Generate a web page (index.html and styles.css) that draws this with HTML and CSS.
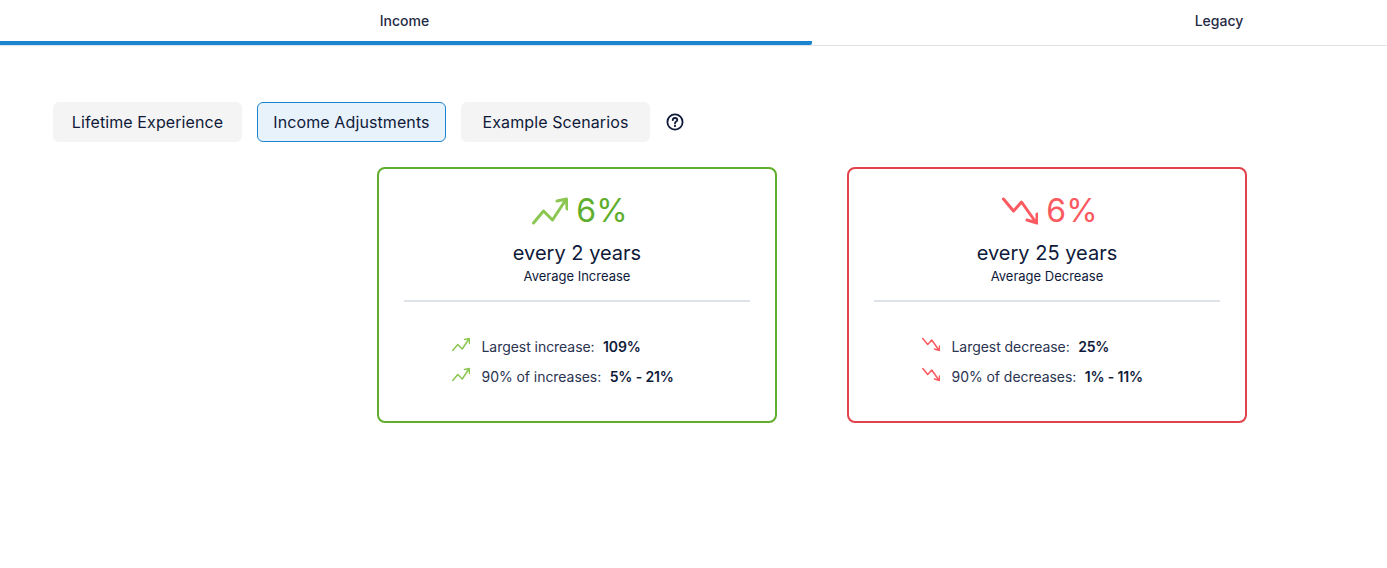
FILE: index.html
```html
<!DOCTYPE html>
<html lang="en">
<head>
<meta charset="utf-8">
<title>Income</title>
<link rel="stylesheet" href="styles.css">
</head>
<body>
<svg class="defs" width="0" height="0" aria-hidden="true">
  <defs>
    <symbol id="up" viewBox="0 0 36 30"><path d="M1.5 27 L11.5 15 L20.5 24 L34 3.5 M25 5 L34.5 3 L35 13" fill="none" stroke="currentColor" stroke-width="3" stroke-linecap="round" stroke-linejoin="round"/></symbol>
    <symbol id="down" viewBox="0 0 36 30"><path d="M1.5 3 L11.5 15 L19.5 6 L34 26.5 M25 24 L35 27 L35 18" fill="none" stroke="currentColor" stroke-width="3" stroke-linecap="round" stroke-linejoin="round"/></symbol>
  </defs>
</svg>
<div class="page">
  <nav class="tabs">
    <div class="tab tab-active">Income</div>
    <div class="tab tab-second">Legacy</div>
  </nav>
  <div class="toolbar">
    <button class="pill">Lifetime Experience</button>
    <button class="pill pill-active">Income Adjustments</button>
    <button class="pill">Example Scenarios</button>
    <svg class="help" viewBox="0 0 18 18" width="18" height="18" aria-hidden="true">
      <circle cx="9" cy="9" r="7.6" fill="none" stroke="currentColor" stroke-width="1.8"/>
      <path d="M6.7 7.1 C6.8 5.7 7.8 5 9 5 C10.3 5 11.3 5.8 11.3 7 C11.3 8.6 9 8.6 9 10.4" fill="none" stroke="currentColor" stroke-width="1.8" stroke-linecap="round"/>
      <circle cx="9" cy="12.9" r="1.1" fill="currentColor"/>
    </svg>
  </div>
  <main class="cards">
    <section class="card card-up">
      <div class="headline">
        <svg class="icon-lg"><use href="#up"/></svg>
        <span class="pct">6%</span>
      </div>
      <div class="freq">every 2 years</div>
      <div class="avg">Average Increase</div>
      <hr class="rule">
      <ul class="stats">
        <li class="stat"><svg class="icon-sm"><use href="#up"/></svg><span>Largest increase:</span><b>109%</b></li>
        <li class="stat"><svg class="icon-sm"><use href="#up"/></svg><span>90% of increases:</span><b>5% - 21%</b></li>
      </ul>
    </section>
    <section class="card card-down">
      <div class="headline">
        <svg class="icon-lg"><use href="#down"/></svg>
        <span class="pct">6%</span>
      </div>
      <div class="freq">every 25 years</div>
      <div class="avg">Average Decrease</div>
      <hr class="rule">
      <ul class="stats">
        <li class="stat"><svg class="icon-sm"><use href="#down"/></svg><span>Largest decrease:</span><b>25%</b></li>
        <li class="stat"><svg class="icon-sm"><use href="#down"/></svg><span>90% of decreases:</span><b>1% - 11%</b></li>
      </ul>
    </section>
  </main>
</div>
</body>
</html>
```

FILE: styles.css
```css
* { box-sizing: border-box; }
html, body { margin: 0; padding: 0; height: 100%; overflow: hidden; background: #fff; }
body { font-family: Inter, "Liberation Sans", sans-serif; color: #0f1a3a; }
.defs { position: absolute; }
.page { width: 1624px; }

.tabs { display: grid; grid-template-columns: 812px 812px; height: 46px; border-bottom: 1px solid #dfe3e8; }
.tab { height: 45px; display: flex; justify-content: center; padding-top: 13px; font-size: 14px; line-height: 16px; font-weight: 500; color: #1f2a44; }
.tab-active { border-bottom: 4px solid #1b84d0; border-radius: 0 2px 2px 0; padding-right: 3px; }
.tab-second { padding-left: 2px; }

.toolbar { display: flex; align-items: center; gap: 15px; padding: 56px 0 0 53px; }
.pill { width: 189px; height: 40px; padding: 0; border: 1px solid #f4f4f4; border-radius: 6px; background: #f4f4f4; font: 400 16px/20px Inter, "Liberation Sans", sans-serif; letter-spacing: .1px; color: #0f1a3a; }
.pill-active { background: #e8f2fb; border-color: #1b84d0; }
.help { margin-left: 1px; color: #0f1a3a; }

.cards { display: flex; justify-content: center; gap: 70px; margin-top: 25px; }
.card { width: 400px; height: 256px; padding: 0 25px; border: 2px solid; border-radius: 8px; display: flex; flex-direction: column; align-items: center; }
.card-up { border-color: #5fae2d; }
.card-down { border-color: #e0434b; }

.headline { display: flex; align-items: center; justify-content: center; gap: 8px; height: 44px; margin: 20px 0 0 6px; }
.icon-lg { width: 36px; height: 30px; }
.pct { font-size: 32px; line-height: 44px; font-weight: 400; }
.card-up .headline, .card-up .stat svg { color: #8cc653; }
.card-up .pct { color: #5fae2d; }
.card-down .headline, .card-down .stat svg { color: #fb5a60; }
.card-down .pct { color: #fb5a60; }

.freq { font-size: 20px; line-height: 28px; margin-top: 6px; }
.avg { font-size: 13px; line-height: 18px; }
.rule { width: 100%; height: 2px; margin: 15px 0 0; border: 0; background: #dde2e9; }

.stats { list-style: none; margin: 35px 0 0; padding: 0 0 0 47px; width: 100%; display: flex; flex-direction: column; gap: 10px; }
.stat { display: flex; align-items: center; height: 20px; font-size: 14px; line-height: 20px; letter-spacing: -.05px; color: #2a3350; }
.stat b { margin-left: 8.5px; font-weight: 600; letter-spacing: -.15px; color: #0f1a3a; }
.icon-sm { width: 18px; height: 15px; margin: -6px 11.5px 0 1px; flex: none; }
```
